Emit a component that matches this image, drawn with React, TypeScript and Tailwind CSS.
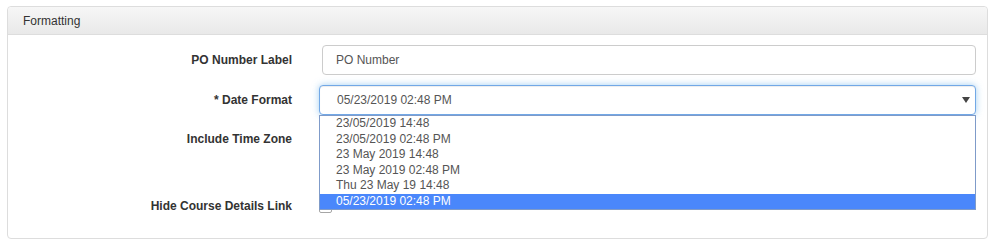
import React from "react";

const options = [
  "23/05/2019 14:48",
  "23/05/2019 02:48 PM",
  "23 May 2019 14:48",
  "23 May 2019 02:48 PM",
  "Thu 23 May 19 14:48",
  "05/23/2019 02:48 PM",
];

function Checkbox() {
  return <span className="block w-[13px] h-[13px] rounded-[2px] border border-[#a6a6a6] bg-white" />;
}

export default function App() {
  const selected = "05/23/2019 02:48 PM";

  return (
    <div className="w-[997px] h-[247px] bg-white pt-[6px] pl-[7px] font-['Liberation_Sans',Arial,sans-serif] text-[12px] text-[#333]">
      <div className="w-[981px] rounded-[4px] border border-[#dddddd] bg-white">
        {/* panel heading */}
        <div className="h-[28px] flex items-center pl-[15px] border-b border-[#dddddd] rounded-t-[4px] bg-gradient-to-b from-[#f6f6f6] to-[#e9e9e9]">
          Formatting
        </div>

        {/* panel body */}
        <div className="pt-[10px] pb-[18px] pr-[11px] grid grid-cols-[284px_1fr] gap-x-[27px]">
          <label className="h-[30px] flex items-center justify-end font-bold">PO Number Label</label>
          <div className="h-[30px] pl-[3px]">
            <div className="h-[30px] rounded-[4px] border border-[#cccccc] flex items-center pl-[13px] text-[#555]">
              PO Number
            </div>
          </div>

          <label className="mt-[10px] h-[30px] flex items-center justify-end font-bold">* Date Format</label>
          <div className="mt-[10px] h-[30px] relative z-10">
            <div className="h-[30px] rounded-[4px] border border-[#72a8e6] shadow-[inset_0_1px_1px_rgba(0,0,0,0.075),0_0_7px_rgba(102,175,233,0.6)] flex items-center justify-between pl-[17px] pr-[5px] text-[#555] bg-white">
              <span>{selected}</span>
              <svg width="8" height="6" viewBox="0 0 8 6">
                <polygon points="0,0 8,0 4,6" fill="#444" />
              </svg>
            </div>
            {/* open list */}
            <div className="absolute left-0 right-0 top-full border border-[#7f9bc9] bg-white">
              {options.map((o) => (
                <div
                  key={o}
                  className={
                    o === selected
                      ? "h-[15.5px] leading-[14px] pl-[16px] bg-[#4a87fb] text-white"
                      : "h-[15.5px] leading-[14px] pl-[16px] text-[#555]"
                  }
                >
                  {o}
                </div>
              ))}
            </div>
          </div>

          <label className="mt-[10px] h-[28px] flex items-center justify-end font-bold">Include Time Zone</label>
          <div className="mt-[10px] h-[28px] flex items-center">
            <Checkbox />
          </div>

          <label className="mt-[39px] h-[28px] flex items-center justify-end font-bold">Hide Course Details Link</label>
          <div className="mt-[39px] h-[28px] flex items-center">
            <Checkbox />
          </div>
        </div>
      </div>
    </div>
  );
}
